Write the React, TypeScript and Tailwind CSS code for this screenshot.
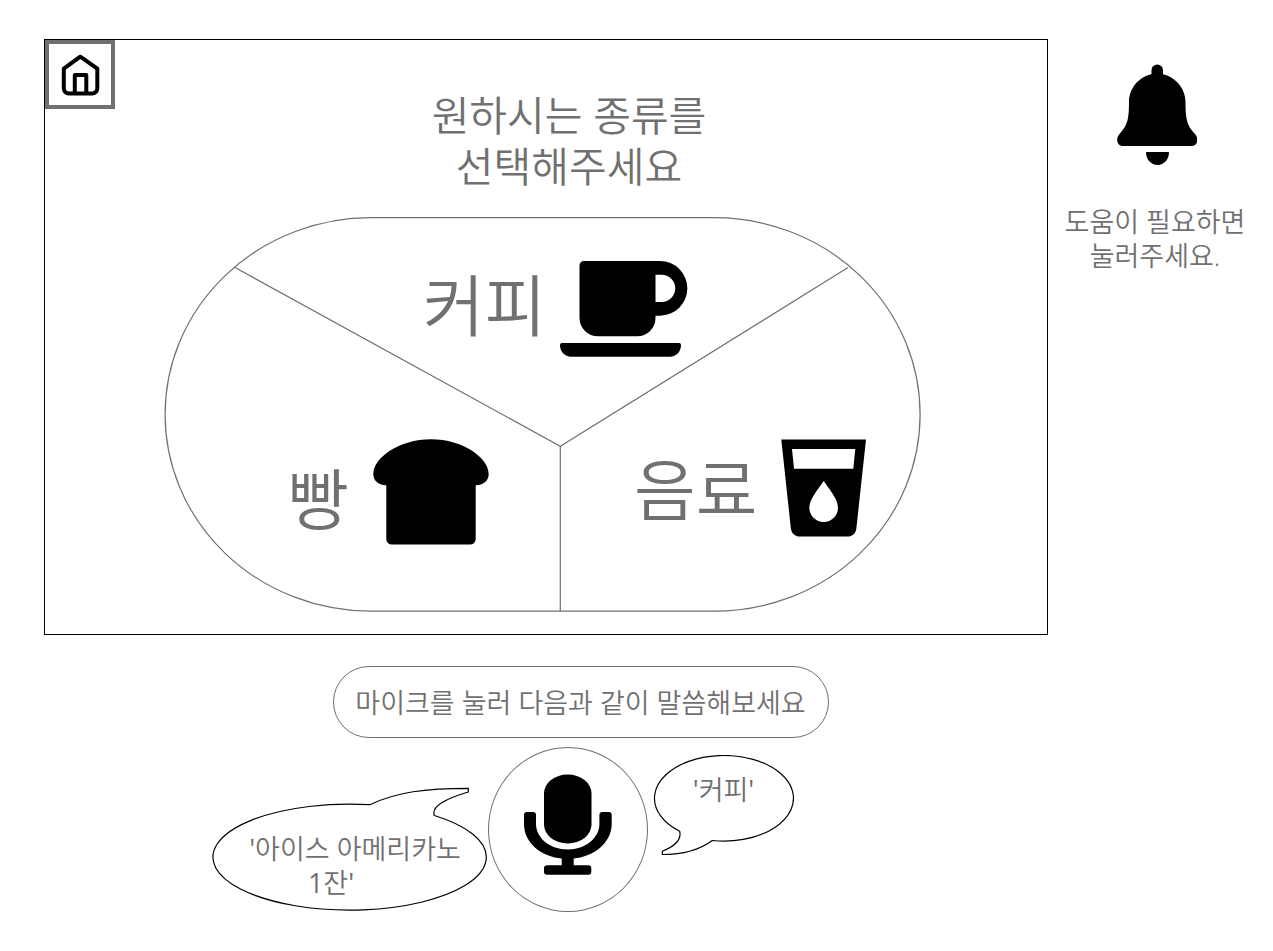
import React from "react";

function HomeIcon() {
  return (
    <svg viewBox="0 0 40 44" className="h-11 w-10" fill="none" stroke="currentColor" strokeWidth="4" strokeLinejoin="round" aria-hidden="true">
      <path d="M20.300 3.700 37.300 15.700V35.500a5 5 0 0 1-5 5h-23.500a5 5 0 0 1-5-5V15.700Z" />
      <path d="M14.800 40.500V22h11.500V40.500" />
    </svg>
  );
}

function BellIcon() {
  return (
    <svg viewBox="-4 0 84 101" className="h-[101px] w-[84px]" fill="currentColor" aria-hidden="true">
      <rect x="34.5" y="0.5" width="11.5" height="16" rx="5.7" />
      <path d="M40.2 9.5C24 10 12 23 12 38C12 56 10 62 2.5 70C-2 75 .5 82 6 82H74.5C80 82 82.500 75 78 70C70.500 62 68.500 56 68.500 38C68.500 23 56 10 40.200 9.500Z" />
      <path d="M29 88H52C52 95.500 47 101 40.500 101S29 95.500 29 88Z" />
    </svg>
  );
}

function CupIcon() {
  return (
    <svg viewBox="0 0 128 96" className="h-24 w-32" fill="currentColor" aria-hidden="true">
      <path fillRule="evenodd" d="M24 0H100A27.300 27.300 0 0 1 100 54.700H95.500V57A18.300 18.300 0 0 1 77.200 75.300H38A18.500 18.300 0 0 1 19.500 57V4.500A4.500 4.500 0 0 1 24 0ZM95.500 13.700V41H101.600A13.650 13.650 0 0 0 101.600 13.700Z" />
      <path d="M2 82H119Q121 82 121 84C121 91 116 95.700 110 95.700H11C5 95.700 0 91 0 84Q0 82 2 82Z" />
    </svg>
  );
}

function BreadIcon() {
  return (
    <svg viewBox="0 0 116 106" className="h-[106px] w-[116px]" fill="currentColor" aria-hidden="true">
      <path d="M58 .3C90 .3 115.700 19 115.700 35C115.700 42 110 46.300 102.700 46.300V100A5.500 5.500 0 0 1 97.200 105.500H18.800A5.500 5.500 0 0 1 13.300 100V46.300C6 46.300 .3 42 .3 35C.3 19 26 .3 58 .3Z" />
    </svg>
  );
}

function GlassIcon() {
  return (
    <svg viewBox="0 0 86 98" className="h-[98px] w-[86px]" fill="currentColor" aria-hidden="true">
      <path fillRule="evenodd" d="M.3 .5H85L75.400 89C74.800 94.500 71.500 97.600 66.500 97.600H19C14 97.600 10.500 94.500 9.800 89ZM11 10 13 29.700H72.300L74.300 10ZM42.700 42C38 49 28.300 60 28.300 68.500A14.350 14.500 0 0 0 57 68.500C57 60 47.400 49 42.700 42Z" />
    </svg>
  );
}

function MicIcon() {
  return (
    <svg viewBox="0 0 90 101" className="h-[101px] w-[90px]" fill="currentColor" aria-hidden="true">
      <rect x="21" y="0.500" width="47.500" height="69" rx="23.700" ry="19" />
      <path d="M4 38H10Q13 38 13 41V50C13 64 27 75.500 44.700 75.500S76.400 64 76.400 50V41Q76.400 38 79.400 38H85.700Q88.700 38 88.700 41V50C88.700 68 72 82.500 50.700 84.500V91.300H65.300Q68.300 91.300 68.300 94.300V97.700Q68.300 100.700 65.300 100.700H24Q21 100.700 21 97.700V94.300Q21 91.300 24 91.300H38.700V84.500C17 82.500 1 68 1 50V41Q1 38 4 38Z" />
    </svg>
  );
}

function Wheel() {
  return (
    <div className="relative mr-[7px] h-[395px] w-[755px] shrink-0">
      <svg viewBox="0 0 755 395" className="absolute inset-0 h-full w-full overflow-visible" fill="none" stroke="#707070" strokeWidth="1.200" aria-hidden="true">
        <rect x="0.100" y="0.700" width="755" height="393.500" rx="206" ry="196.700" />
        <path d="M70 50.500 395.300 229.300 683 50.500M395.300 229.300V394" />
      </svg>
      <div className="relative grid h-full grid-cols-[395px_1fr] grid-rows-[183px_1fr] text-[67px] leading-[80px]">
        <button type="button" className="col-span-2 flex items-start justify-center gap-3.5 pl-[26px] pt-11">
          <span className="pt-1">커피</span>
          <span className="text-black"><CupIcon /></span>
        </button>
        <button type="button" className="flex items-start justify-end gap-6 pr-[71px] pt-[39px]">
          <span className="pt-5">빵</span>
          <span className="text-black"><BreadIcon /></span>
        </button>
        <button type="button" className="flex items-start justify-start gap-6 pl-[74px] pt-[39px]">
          <span className="pt-2.5">음료</span>
          <span className="text-black"><GlassIcon /></span>
        </button>
      </div>
    </div>
  );
}

export default function App() {
  return (
    <div className="flex min-h-screen items-start bg-white pl-11 pr-[11px] pt-[39px] font-['Open_Sans','Noto_Sans_CJK_KR',sans-serif] font-[350] text-[#707070]">
      <main className="min-w-0 flex-1">
        <section className="border border-black pb-[22px]">
          <header className="flex items-start">
            <button type="button" aria-label="홈" className="flex h-[69px] w-[70px] shrink-0 items-center justify-center border-4 border-[#707070] text-black">
              <HomeIcon />
            </button>
            <h1 className="flex-1 pr-6 pt-[50px] text-center text-[41px] font-[350] leading-[51px]">
              원하시는 종류를
              <br />
              선택해주세요
            </h1>
          </header>
          <div className="mt-[25px] flex justify-center">
            <Wheel />
          </div>
        </section>

        <section className="flex flex-col items-center pt-[31px] text-[27px] leading-[34px]">
          <div className="pl-[69px]">
            <p className="flex h-[72px] w-[496px] items-center justify-center rounded-[36px] border border-[#707070] pt-0.5">
              마이크를 눌러 다음과 같이 말씀해보세요
            </p>
          </div>
          <div className="mt-[9px] flex items-start pr-[87px]">
            <div className="relative mt-[41px] h-[124px] w-[274px]">
              <svg viewBox="0 0 274 124" className="absolute inset-0 h-full w-full overflow-visible" fill="none" stroke="#000" strokeWidth="1.200" aria-hidden="true">
                <path d="M159 16.700C185 4 215 .3 257.300 .3V4C235 10.500 220 18.500 223.300 27.500A136.700 53 0 1 1 159 16.700Z" />
              </svg>
              <p className="relative pl-3.5 pt-11 text-center">
                <span className="block"><span className="font-normal">'</span>아이스 아메리카노</span>
                <span className="block pr-12"><span className="font-normal">1</span>잔<span className="font-normal">'</span></span>
              </p>
            </div>
            <button type="button" aria-label="마이크" className="ml-[3px] flex h-[165px] w-40 items-center justify-center rounded-[50%] border border-[#707070] pb-2.5 text-black">
              <MicIcon />
            </button>
            <div className="relative ml-[5px] mt-2 h-[101px] w-[141px]">
              <svg viewBox="0 0 141 101" className="absolute inset-0 h-full w-full" fill="none" stroke="#000" strokeWidth="1.200" aria-hidden="true">
                <path d="M59.300 85.500C48 94 30 99.500 9.300 99.500V96.300C20 92 29 86 26.700 76.300A69.500 42.800 0 1 1 59.300 85.500Z" />
              </svg>
              <p className="relative pt-[18px] text-center">
                <span className="font-normal">'</span>커피<span className="font-normal">'</span>
              </p>
            </div>
          </div>
        </section>
      </main>

      <aside className="w-[214px] shrink-0">
        <button type="button" className="flex w-full flex-col items-center gap-10 pt-[25px] text-[27px] leading-[34px]">
          <span className="text-black"><BellIcon /></span>
          <span>
            도움이 필요하면
            <br />
            눌러주세요.
          </span>
        </button>
      </aside>
    </div>
  );
}
